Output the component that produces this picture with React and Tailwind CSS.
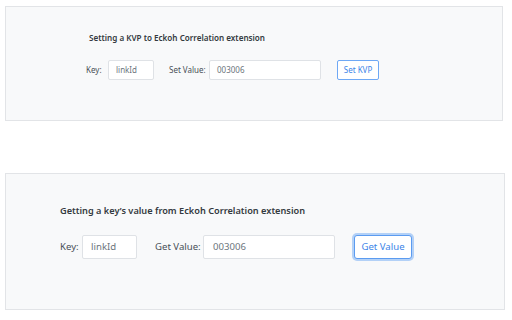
import React from "react";

function Field({ value, className }) {
  return (
    <div
      className={
        "flex items-center rounded-[2px] border border-[#dfe2e6] bg-white text-[#6c757d] " +
        className
      }
    >
      {value}
    </div>
  );
}

export default function App() {
  return (
    <div
      className="h-[320px] w-[512px] overflow-hidden bg-white"
      style={{ fontFamily: '"Noto Sans", "Open Sans", sans-serif' }}
    >
      {/* set panel */}
      <div className="ml-[5px] mt-[6px] h-[115px] w-[498px] border border-[#e2e4e7] bg-[#f8f9fa] pl-[80px] pt-[25px]">
        <h4 className="ml-[3px] text-[8.1px] leading-[12px] font-semibold text-[#343a40]">
          Setting a KVP to Eckoh Correlation extension
        </h4>
        <div className="mt-[16px] flex h-[20px] items-center whitespace-nowrap text-[8px] text-[#495057]">
          <span className="w-[22px]">Key:</span>
          <Field value="linkId" className="h-[20px] w-[46px] pl-[7px]" />
          <span className="ml-[15px] w-[40px]">Set Value:</span>
          <Field value="003006" className="h-[20px] w-[112px] pl-[7px]" />
          <button className="ml-[16px] flex h-[20px] w-[42px] items-center justify-center rounded-[2px] border border-[#6ea8f5] bg-white text-[8px] text-[#3d85e8]">
            Set KVP
          </button>
        </div>
      </div>

      {/* get panel */}
      <div className="ml-[5px] mt-[52px] h-[137px] w-[500px] border border-[#e2e4e7] bg-[#f8f9fa] pl-[54px] pt-[30px]">
        <h4 className="text-[9.2px] leading-[14px] font-semibold text-[#343a40]">
          Getting a key’s value from Eckoh Correlation extension
        </h4>
        <div className="mt-[17px] flex h-[24px] items-center whitespace-nowrap text-[9.6px] text-[#495057]">
          <span className="w-[22px]">Key:</span>
          <Field value="linkId" className="h-[24px] w-[55px] pl-[8px]" />
          <span className="ml-[18px] w-[48px]">Get Value:</span>
          <Field value="003006" className="h-[24px] w-[132px] pl-[9px]" />
          <button className="ml-[19px] flex h-[24px] w-[58px] items-center justify-center rounded-[3px] border border-[#5b9bf0] bg-white text-[9.6px] text-[#3d85e8] shadow-[0_0_0_2px_rgba(96,160,245,0.45)]">
            Get Value
          </button>
        </div>
      </div>
    </div>
  );
}
